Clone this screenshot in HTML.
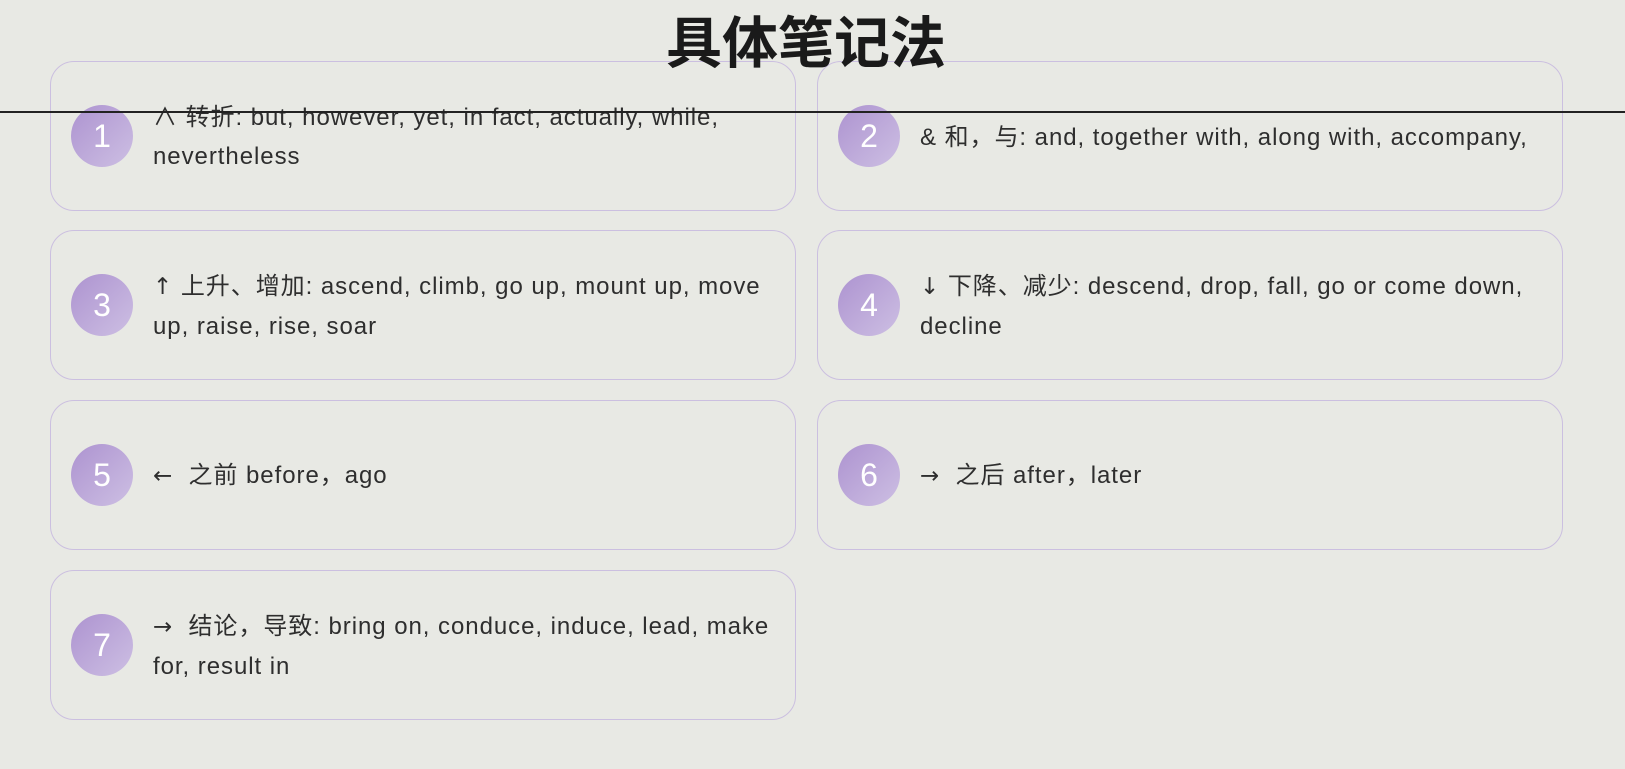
<!DOCTYPE html>
<html><head><meta charset="utf-8"><style>
html,body{margin:0;padding:0}
body{width:1625px;height:769px;background:#e8e9e4;position:relative;overflow:hidden;font-family:"Liberation Sans","Noto Sans CJK SC",sans-serif;color:#2e2e2e}
.title{position:absolute;left:0;width:1612px;text-align:center;top:2px;font-size:56px;font-weight:bold;font-family:"Noto Sans CJK SC","WenQuanYi Zen Hei",sans-serif;color:#1a1a1a;line-height:76px;z-index:2}
.card{position:absolute;width:746px;height:150px;border:1.5px solid #cbbfe0;border-radius:24px;box-sizing:border-box}
.c{position:absolute;left:20px;top:43px;width:62px;height:62px;border-radius:50%;background:linear-gradient(135deg,#ad93d0,#cdbfe3);color:#fff;font-size:32px;text-align:center;line-height:62px}
.t{position:absolute;left:102px;right:4px;top:0;height:150px;display:flex;align-items:center;font-size:24px;letter-spacing:0.95px;line-height:39px;white-space:nowrap}
.a{font-family:"DejaVu Sans",sans-serif;font-size:23px}
.line{position:absolute;left:0;width:1625px;top:111px;height:1.5px;background:#222;z-index:3}
</style></head><body>
<div class="title">具体笔记法</div>
<div class="line"></div>
<div class="card" style="left:50px;top:61px"><div class="c">1</div><div class="t"><div>∧ 转折: but, however, yet, in fact, actually, while,<br>nevertheless</div></div></div>
<div class="card" style="left:817px;top:61px"><div class="c">2</div><div class="t"><div>&amp; 和，与: and, together with, along with, accompany,</div></div></div>
<div class="card" style="left:50px;top:230px"><div class="c">3</div><div class="t"><div><span class="a">↑</span> 上升、增加: ascend, climb, go up, mount up, move<br>up, raise, rise, soar</div></div></div>
<div class="card" style="left:817px;top:230px"><div class="c">4</div><div class="t"><div><span class="a">↓</span> 下降、减少: descend, drop, fall, go or come down,<br>decline</div></div></div>
<div class="card" style="left:50px;top:400px"><div class="c">5</div><div class="t"><div><span class="a">←</span>&nbsp; 之前 before，ago</div></div></div>
<div class="card" style="left:817px;top:400px"><div class="c">6</div><div class="t"><div><span class="a">→</span>&nbsp; 之后 after，later</div></div></div>
<div class="card" style="left:50px;top:570px"><div class="c">7</div><div class="t"><div><span class="a">→</span>&nbsp; 结论，导致: bring on, conduce, induce, lead, make<br>for, result in</div></div></div>
</body></html>
